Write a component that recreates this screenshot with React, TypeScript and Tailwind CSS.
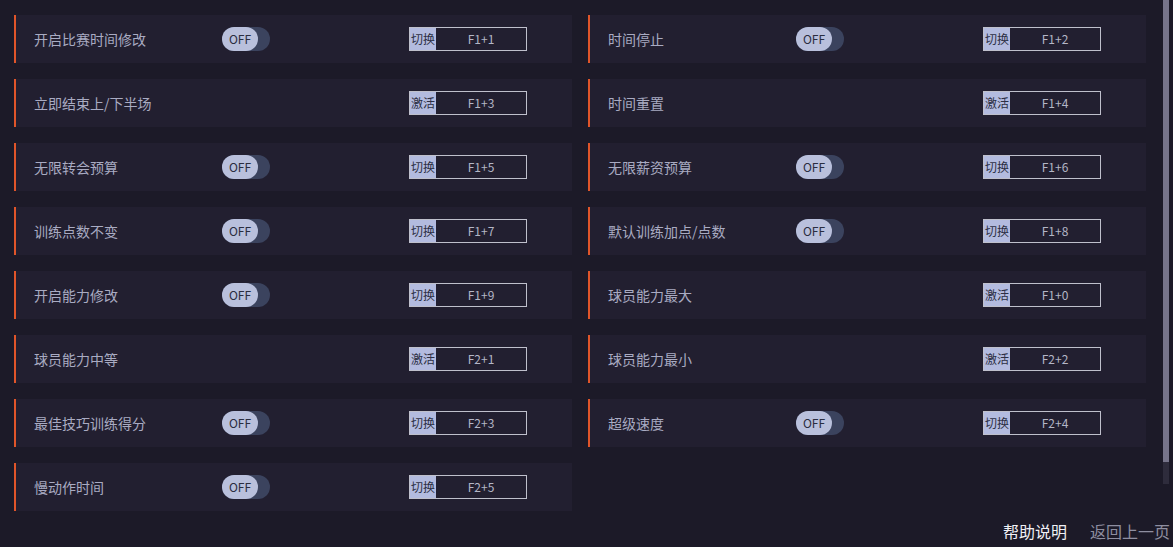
import React from "react";

type Item = {
  label: string;
  toggle: boolean;
  action: "切换" | "激活";
  keys: string;
};

const items: Item[] = [
  { label: "开启比赛时间修改", toggle: true, action: "切换", keys: "F1+1" },
  { label: "时间停止", toggle: true, action: "切换", keys: "F1+2" },
  { label: "立即结束上/下半场", toggle: false, action: "激活", keys: "F1+3" },
  { label: "时间重置", toggle: false, action: "激活", keys: "F1+4" },
  { label: "无限转会预算", toggle: true, action: "切换", keys: "F1+5" },
  { label: "无限薪资预算", toggle: true, action: "切换", keys: "F1+6" },
  { label: "训练点数不变", toggle: true, action: "切换", keys: "F1+7" },
  { label: "默认训练加点/点数", toggle: true, action: "切换", keys: "F1+8" },
  { label: "开启能力修改", toggle: true, action: "切换", keys: "F1+9" },
  { label: "球员能力最大", toggle: false, action: "激活", keys: "F1+0" },
  { label: "球员能力中等", toggle: false, action: "激活", keys: "F2+1" },
  { label: "球员能力最小", toggle: false, action: "激活", keys: "F2+2" },
  { label: "最佳技巧训练得分", toggle: true, action: "切换", keys: "F2+3" },
  { label: "超级速度", toggle: true, action: "切换", keys: "F2+4" },
  { label: "慢动作时间", toggle: true, action: "切换", keys: "F2+5" },
];

function Toggle() {
  return (
    <div className="flex h-6 w-12 items-center rounded-full bg-[#3b435e]">
      <div className="flex h-6 w-9 items-center justify-center rounded-full bg-[#b9c0dc] text-[12px] text-[#2a2d40]">
        OFF
      </div>
    </div>
  );
}

function Row({ item }: { item: Item }) {
  return (
    <div className="flex h-12 items-center border-l-2 border-[#e0552a] bg-[#221f30] pl-[18px]">
      <div className="w-[188px] text-[14px] text-[#a9abc2]">{item.label}</div>
      <div className="w-[187px]">{item.toggle && <Toggle />}</div>
      <div className="flex h-6 w-[118px] items-stretch border border-[#bfc0cc]">
        <div className="flex w-[26px] items-center justify-center bg-[#b3bbdf] text-[12px] text-[#2c2f44]">
          {item.action}
        </div>
        <div className="flex flex-1 items-center justify-center text-[12px] text-[#b4b6c6]">
          {item.keys}
        </div>
      </div>
    </div>
  );
}

export default function App() {
  return (
    <div
      className="relative h-[547px] w-[1173px] overflow-hidden bg-[#1c1a28]"
      style={{ fontFamily: '"Noto Sans CJK SC", "Noto Sans", sans-serif' }}
    >
      <div className="grid w-[1146px] grid-cols-2 gap-x-4 gap-y-4 pl-[14px] pt-[15px]">
        {items.map((it) => (
          <Row key={it.keys} item={it} />
        ))}
      </div>
      <div className="absolute right-[4px] top-0 h-[462px] w-[6px] bg-[#76748a]" />
      <div className="absolute right-[4px] top-[462px] h-[22px] w-[6px] bg-[#2e2c3c]" />
      <div className="flex justify-end gap-[23px] pr-[3px] pt-[8px] text-[16px] leading-6">
        <span className="text-[#f0f0f5]">帮助说明</span>
        <span className="text-[#8e8ea0]">返回上一页</span>
      </div>
    </div>
  );
}
